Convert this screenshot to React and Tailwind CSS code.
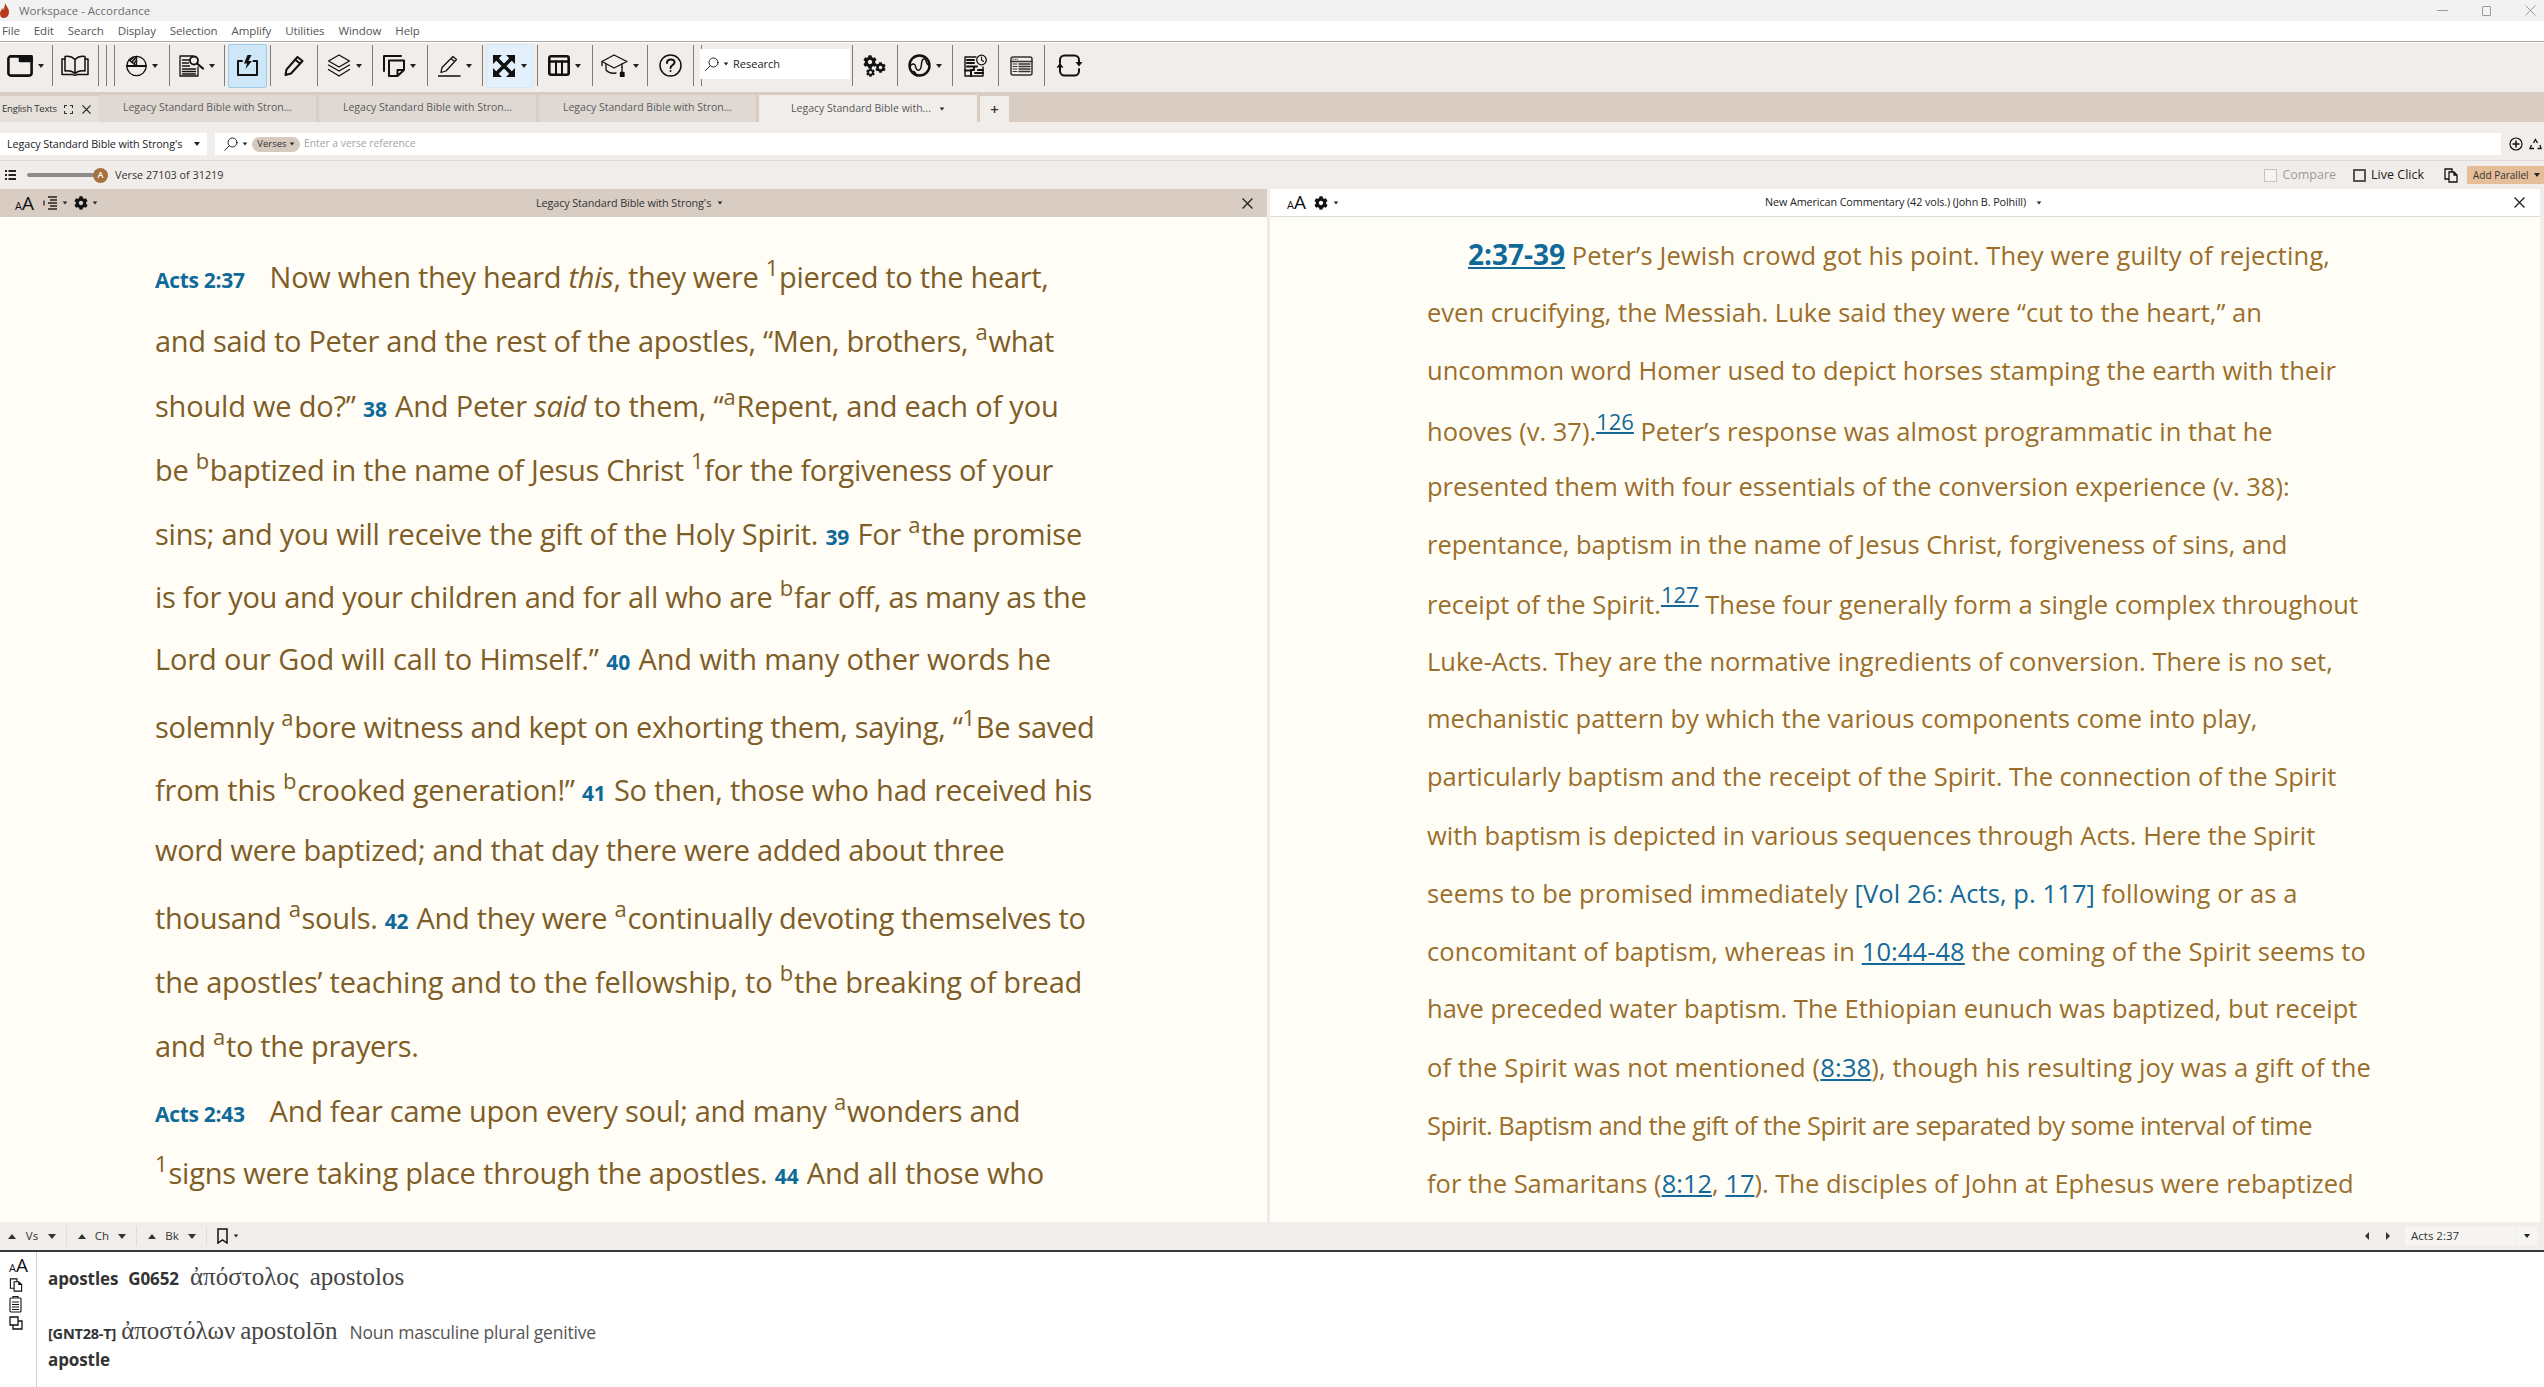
import React from "react";
import { FaCog } from "react-icons/fa";

const ui = "font-['Open_Sans','Noto_Sans',sans-serif]";

const Caret = ({ className = "" }) => (
  <span className={`inline-block shrink-0 w-0 h-0 border-x-[3px] border-x-transparent border-t-[4px] border-t-[#222] ${className}`} />
);

const Up = () => <span className="inline-block w-0 h-0 border-x-[4px] border-x-transparent border-b-[5px] border-b-[#333]" />;
const Down = () => <span className="inline-block w-0 h-0 border-x-[4px] border-x-transparent border-t-[5px] border-t-[#333]" />;

const Ic = ({ w = 26, h = 26, sw = 1.6, stroke = "#111", children }) => (
  <svg width={w} height={h} viewBox={`0 0 ${w} ${h}`} fill="none" stroke={stroke} strokeWidth={sw} strokeLinejoin="round" strokeLinecap="round">
    {children}
  </svg>
);

const Icons = {
  win: (
    <Ic w={26} h={22} sw={2.6}>
      <rect x="1.400" y="1.400" width="23.200" height="19.200" rx="2.500" />
      <rect x="13" y="1.400" width="11.600" height="4.600" fill="#111" />
    </Ic>
  ),
  book: (
    <Ic w={28} h={21} sw={1.500}>
      <path d="M14 4.500C11 1.500 7 1 4 1.500V16c3-.5 7-.5 10 2.500 3-3 7-3 10-2.500V1.500c-3-.5-7 0-10 3zM14 4.500v14" />
      <path d="M4 4H1v15.500h11c1 1 3 1 4 0h11V4h-3" />
    </Ic>
  ),
  pie: (
    <Ic w={21} h={22} sw={1.300}>
      <circle cx="10.500" cy="11" r="9.700" />
      <path d="M1 11h19" strokeWidth="1.800" />
      <path d="M10.500 11V1.500M10.500 11L3 5" />
      <path d="M4.500 5L7.500 2.500M6 7L10 2.500M8 8.500L10.500 5.500" strokeWidth="1.600" />
    </Ic>
  ),
  doc: (
    <Ic w={25} h={22} sw={1.300}>
      <path d="M14 1H1v20h18v-9" />
      <path d="M3.500 5h7M3.500 8h6M3.500 11h7M3.500 14h13M3.500 16.500h13M3.500 19h13" strokeWidth="1.500" />
      <circle cx="15" cy="5.500" r="4" strokeWidth="1.800" />
      <path d="M18 8.500L24 13.500" strokeWidth="2.200" />
    </Ic>
  ),
  bolt: (
    <Ic w={21} h={21} sw={2}>
      <path d="M5 6H1v14h19V6h-3.500" />
      <path d="M10.500 0L7 8.500h3L8.500 14 15 6h-3.500L14.500 0z" fill="#111" stroke="none" />
    </Ic>
  ),
  pencil: (
    <Ic w={20} h={21} sw={2}>
      <path d="M13.500 2l5 4L7 18.500l-5.500 1.500 1-5.500z" />
      <path d="M11 4.500l5 4" />
    </Ic>
  ),
  layers: (
    <Ic w={24} h={23} sw={1.300}>
      <path d="M12 1l10.500 6L12 13 1.500 7z" />
      <path d="M1.500 11L12 17l10.500-6M1.500 15.500L12 22l10.500-6.500" />
    </Ic>
  ),
  copy: (
    <Ic w={22} h={22} sw={2}>
      <path d="M1 16V1h17" />
      <path d="M6 5.500h15v9.500l-6.500 6H6zM21 15h-6.500v6" />
    </Ic>
  ),
  high: (
    <Ic w={23} h={22} sw={1.300}>
      <path d="M15 1.500l3.500 3L8 16l-5 1.500 1-5zM13 3.500l3.500 3" />
      <path d="M0 21h22" strokeWidth="1.600" />
    </Ic>
  ),
  expand: (
    <svg width="22" height="22" viewBox="0 0 22 22" fill="#111" stroke="#111">
      <path d="M4 4L18 18M18 4L4 18" strokeWidth="3.600" fill="none" />
      <path d="M0 0h9L0 9zM22 0v9L13 0zM0 22v-9l9 9zM22 22h-9l9-9z" stroke="none" />
    </svg>
  ),
  table: (
    <Ic w={22} h={21} sw={2.600}>
      <rect x="1.300" y="1.300" width="19.400" height="18.400" rx="2" />
      <path d="M1.300 6.500h19.400" />
      <path d="M8 6.500v13M14 6.500v13" strokeWidth="2" />
    </Ic>
  ),
  cap: (
    <Ic w={27} h={23} sw={1.300}>
      <path d="M1 7.500L13 1l13 6.500L13 14z" />
      <path d="M5 10v6c3 3.500 7 3.500 10 3M21 10v3.500" />
      <path d="M1 7.500v4M21 13.500v5" />
      <rect x="19.500" y="18.500" width="3.500" height="4" fill="#111" />
    </Ic>
  ),
  help: (
    <Ic w={23} h={23} sw={1.500}>
      <circle cx="11.500" cy="11.500" r="10.500" />
      <path d="M8 9c0-5 7.500-4.500 7.500-.5 0 2.500-4 2.500-4 5.500" strokeWidth="2" />
      <circle cx="11.500" cy="17" r="1" fill="#111" stroke="none" />
    </Ic>
  ),
  lens: (
    <Ic w={14} h={14} sw={0.900}>
      <circle cx="8.500" cy="5.500" r="4.500" />
      <path d="M5.200 8.800L.800 13.300" />
    </Ic>
  ),
  gears: (
    <svg width="23" height="22" viewBox="0 0 23 22" color="#111">
      <FaCog x={0} y={0} size={14} />
      <FaCog x={12} y={7} size={11} />
      <FaCog x={3} y={13} size={9} />
    </svg>
  ),
  globe: (
    <Ic w={23} h={23} sw={2.400}>
      <circle cx="11.500" cy="11.500" r="10" />
      <path d="M2 12c2-2 4-3 5-1s1 6 4 5 2-6 3-9 3-3 4 0 2 4 3 4" strokeWidth="1.500" />
      <path d="M4 18.500c1-1.500 2-1 3 0s1 3 2 3.500" strokeWidth="1.500" />
    </Ic>
  ),
  map: (
    <Ic w={23} h={23} sw={2}>
      <path d="M12 3H1v19h18V13" strokeWidth="1.400" />
      <path d="M3 6h7M3 9h7M3 12.500h10M10 12.500V16H7v6M1 16.500h6M11 19h8M14 16h5" />
      <circle cx="17.500" cy="6" r="4.800" strokeWidth="1.300" fill="#f0edea" />
      <path d="M17.500 3v3l2 1.500" strokeWidth="1.100" />
    </Ic>
  ),
  list: (
    <Ic w={23} h={20} sw={1.500} stroke="#333">
      <rect x="1" y="1" width="21" height="18" rx="2" />
      <path d="M1 5.500h21" />
      <path d="M3 3.300h.5M5 3.300h.5M7 3.300h.5" strokeWidth="0.900" />
      <path d="M3 8h4M3 10.500h4M3 13h4M3 15.500h4" strokeWidth="1" />
      <path d="M9 8h11M9 10.500h11M9 13h11M9 15.500h11" strokeWidth="1.300" />
    </Ic>
  ),
  sync: (
    <Ic w={27} h={23} sw={2}>
      <path d="M4 9V6a4.500 4.500 0 0 1 4.500-4.500h10A4.500 4.500 0 0 1 23 6v3" />
      <path d="M23 15v2a4.500 4.500 0 0 1-4.500 4.500h-10A4.500 4.500 0 0 1 4 17v-4" />
      <path d="M19.500 8h7L23 12.500zM.5 13.500h7L4 9z" fill="#111" stroke="none" />
    </Ic>
  ),
};

const XIcon = ({ size = 10, sw = 1.300, color = "#222" }) => (
  <svg width={size} height={size} viewBox="0 0 10 10" stroke={color} strokeWidth={sw} fill="none">
    <path d="M.5.5l9 9M9.500.5l-9 9" />
  </svg>
);

const Cell = ({ w, children, caret, inner }) => (
  <div className={`${w} h-[41px] shrink-0 border-r border-[#7d7d7d] flex items-center justify-center pr-[1px]`}>
    {inner ? (
      <div className={inner}>
        {children}
        {caret && <Caret className="ml-[5px]" />}
      </div>
    ) : (
      <>
        {children}
        {caret && <Caret className="ml-[5px]" />}
      </>
    )}
  </div>
);

const Toolbar = () => (
  <div className="h-[49px] bg-[#f0edea] flex items-start pt-[2px]">
    <Cell w="w-[53px]" caret>{Icons.win}</Cell>
    <Cell w="w-[46px]">{Icons.book}</Cell>
    <div className="w-[8px] h-[41px] border-r border-[#7d7d7d]" />
    <div className="w-[8px] h-[41px] border-r border-[#7d7d7d]" />
    <Cell w="w-[55px]" caret>{Icons.pie}</Cell>
    <Cell w="w-[55px]" caret>{Icons.doc}</Cell>
    <Cell w="w-[46px]" inner="w-[39px] h-[44px] bg-[#cde6f8] border border-[#9dcbec] rounded-[2px] flex items-center justify-center">{Icons.bolt}</Cell>
    <Cell w="w-[47px]">{Icons.pencil}</Cell>
    <Cell w="w-[55px]" caret>{Icons.layers}</Cell>
    <Cell w="w-[55px]" caret>{Icons.copy}</Cell>
    <Cell w="w-[55px]" caret>{Icons.high}</Cell>
    <Cell w="w-[55px]" inner="w-[47px] h-[44px] bg-[#e3f0fb] border border-[#d5e8f7] rounded-[2px] flex items-center justify-center">
      {Icons.expand}
      <Caret className="ml-[6px]" />
    </Cell>
    <Cell w="w-[55px]" caret>{Icons.table}</Cell>
    <Cell w="w-[55px]" caret>{Icons.cap}</Cell>
    <Cell w="w-[46px]">{Icons.help}</Cell>
    <div className="w-[8px] h-[41px] border-r border-[#7d7d7d]" />
    <div className="w-[150px] h-[30px] mt-[4px] -ml-[2px] bg-white flex items-center pl-[5px] text-[11px] text-[#222]">
      {Icons.lens}
      <Caret className="mx-[4px] scale-75" />
      Research
    </div>
    <div className="w-[3px] h-[41px] border-r border-[#7d7d7d]" />
    <Cell w="w-[45px]">{Icons.gears}</Cell>
    <Cell w="w-[55px]" caret>{Icons.globe}</Cell>
    <Cell w="w-[46px]">{Icons.map}</Cell>
    <Cell w="w-[46px]">{Icons.list}</Cell>
    <div className="ml-[11px] mt-[9px]">{Icons.sync}</div>
  </div>
);

const Tab = ({ children, active, w }) => (
  <div className={`${w} h-[27px] mr-[3px] self-end shrink-0 flex items-center justify-center text-[10.500px] text-[#5a5a5a] ${active ? "bg-[#f0edea] h-[26px]" : "bg-[#e0d9d3] border-b-2 border-[#e0d9d3]"}`}>
    {children}
  </div>
);

const Tabs = () => (
  <div className="h-[30px] bg-[#d8ccc3] flex items-end">
    <div className="w-[99px] h-[26px] bg-[#e5e0da] flex items-center pl-[2px] text-[9.500px] text-[#333] tracking-[-0.2px]">
      English Texts
      <svg className="ml-[7px]" width="9" height="9" viewBox="0 0 9 9" fill="none" stroke="#333" strokeWidth="1.100">
        <path d="M.5 3V.5H3M6 .5h2.500V3M8.500 6v2.500H6M3 8.500H.5V6" />
      </svg>
      <span className="ml-[9px]"><XIcon size={9} /></span>
    </div>
    <Tab w="w-[217px]">Legacy Standard Bible with Stron...</Tab>
    <Tab w="w-[217px]">Legacy Standard Bible with Stron...</Tab>
    <Tab w="w-[217px]">Legacy Standard Bible with Stron...</Tab>
    <Tab w="w-[218px]" active>
      Legacy Standard Bible with...
      <Caret className="ml-[8px] scale-75" />
    </Tab>
    <div className="w-[29px] h-[26px] bg-[#f0edea] flex items-center justify-center text-[15px] font-semibold text-[#333]">+</div>
  </div>
);

const SearchRow = () => (
  <div className="h-[39px] bg-[#f0edea] border-b border-[#dcdcdc] pt-[11px] flex items-start">
    <div className="w-[207px] h-[22px] bg-white flex items-center pl-[7px] text-[10.800px] text-[#222] tracking-[-0.1px] shrink-0">
      Legacy Standard Bible with Strong's
      <Caret className="ml-auto mr-[7px]" />
    </div>
    <div className="ml-[8px] flex-1 h-[22px] bg-white flex items-center pl-[9px] text-[11px]">
      {Icons.lens}
      <Caret className="ml-[4px] scale-75" />
      <span className="ml-[4px] w-[48px] h-[15px] rounded-full bg-[#d6cabf] flex items-center justify-center text-[9.500px] text-[#333]">
        Verses
        <Caret className="ml-[2px] scale-75" />
      </span>
      <span className="ml-[4px] text-[#a4a4a4] text-[10.300px]">Enter a verse reference</span>
    </div>
    <div className="w-[43px] h-[22px] flex items-center pl-[8px] gap-[6px] shrink-0">
      <svg width="14" height="14" viewBox="0 0 14 14" fill="none" stroke="#111" strokeWidth="1.200">
        <circle cx="7" cy="7" r="6" />
        <path d="M7 3.500v7M3.500 7h7" strokeWidth="1.500" />
      </svg>
      <svg width="13" height="13" viewBox="0 0 13 13" fill="none" stroke="#111" strokeWidth="1.300">
        <path d="M4.500 5L6.500 1.500 8.500 5M11 7l1 3.500H8.500M5 10.500H1L2.500 7" />
      </svg>
    </div>
  </div>
);

const VerseRow = () => (
  <div className="h-[28px] bg-[#f0edea] flex items-center text-[10.800px] text-[#333]">
    <svg className="ml-[5px]" width="11" height="10" viewBox="0 0 11 10" stroke="#222" strokeWidth="1.800">
      <path d="M0 1h2M3.500 1H11M0 5h2M3.500 5H11M0 9h2M3.500 9H11" />
    </svg>
    <div className="ml-[11px] w-[67px] h-[4px] bg-[#8c8c8c] rounded-full" />
    <span className="w-[15px] h-[15px] -ml-[1px] rounded-full bg-[#a5713c] text-white text-[9px] flex items-center justify-center font-semibold">A</span>
    <span className="ml-[7px]">Verse 27103 of 31219</span>
    <div className="ml-auto flex items-center">
      <span className="w-[13px] h-[13px] border border-[#c4c4c4] bg-[#f4f4f4]" />
      <span className="ml-[5px] text-[#9c9c9c] text-[12.500px]">Compare</span>
      <span className="ml-[17px] w-[13px] h-[13px] border-2 border-[#555]" />
      <span className="ml-[5px] text-[#222] text-[12.500px]">Live Click</span>
      <svg className="ml-[20px]" width="14" height="15" viewBox="0 0 14 15" fill="none" stroke="#111" strokeWidth="1.300">
        <path d="M5 11H1V1h7v3M5 4h5l3 3v7H5zM10 4v3h3" />
      </svg>
      <div className="ml-[9px] w-[77px] h-[18px] bg-[#e5bd98] flex items-center pl-[6px] text-[10px] text-[#333]">
        Add Parallel
        <Caret className="ml-[5px]" />
      </div>
    </div>
  </div>
);

const Aa = ({ big = "text-[19px]", small = "text-[11px]" }) => (
  <span className="flex items-baseline text-[#111] leading-none">
    <span className={small}>A</span>
    <span className={big}>A</span>
  </span>
);

const PaneHeaders = () => (
  <div className="flex h-[28px]">
    <div className="w-[1267px] bg-[#d8ccc3] relative flex items-center text-[10.800px] text-[#333]">
      <span className="ml-[15px]"><Aa /></span>
      <svg className="ml-[9px]" width="15" height="14" viewBox="0 0 15 14" stroke="#222" strokeWidth="1.300">
        <path d="M5 1h9M7 4h7M5 7h9M7 10h7M5 13h9M1 4.500v5" />
      </svg>
      <Caret className="ml-[4px] scale-75" />
      <span className="ml-[6px]"><FaCog size={14} color="#111" /></span>
      <Caret className="ml-[4px] scale-75" />
      <span className="ml-[438px] tracking-[-0.1px]">Legacy Standard Bible with Strong's</span>
      <Caret className="ml-[6px] scale-75" />
      <span className="ml-auto mr-[14px]"><XIcon size={11} sw={1.200} /></span>
    </div>
    <div className="w-[3px] bg-[#f0edea]" />
    <div className="w-[1270px] bg-white border-b border-[#dcdcdc] flex items-center text-[10.800px] text-[#222]">
      <span className="ml-[17px]"><Aa /></span>
      <span className="ml-[8px]"><FaCog size={14} color="#111" /></span>
      <Caret className="ml-[5px] scale-75" />
      <span className="ml-[426px] tracking-[-0.1px]">New American Commentary (42 vols.) (John B. Polhill)</span>
      <Caret className="ml-[10px] scale-75" />
      <span className="ml-auto mr-[15px]"><XIcon size={11} sw={1.200} /></span>
    </div>
    <div className="flex-1 bg-[#f0edea]" />
  </div>
);

const V = ({ children }) => <b className="text-[#0f6a9a] font-bold text-[21px] mr-[1px]">{children}</b>;
const S = ({ children }) => <sup className="text-[22px] top-[-0.55em] relative align-baseline leading-none mr-[1px]">{children}</sup>;

// left pane: line heights follow the reference (lines with a superscript sit a little lower)
const leftLines = [
  ["h-[64px]", <><V>Acts 2:37</V><span className="ml-[24px]">Now when they heard <i>this</i>, they were <S>1</S>pierced to the heart,</span></>],
  ["h-[65px]", <>and said to Peter and the rest of the apostles, “Men, brothers, <S>a</S>what</>],
  ["h-[64px] tracking-[-0.2px]", <>should we do?” <V>38</V> And Peter <i>said</i> to them, “<S>a</S>Repent, and each of you</>],
  ["h-[64px]", <>be <S>b</S>baptized in the name of Jesus Christ <S>1</S>for the forgiveness of your</>],
  ["h-[63px] tracking-[-0.23px]", <>sins; and you will receive the gift of the Holy Spirit. <V>39</V> For <S>a</S>the promise</>],
  ["h-[62px]", <>is for you and your children and for all who are <S>b</S>far off, as many as the</>],
  ["h-[68px] tracking-[-0.12px]", <>Lord our God will call to Himself.” <V>40</V> And with many other words he</>],
  ["h-[63px]", <>solemnly <S>a</S>bore witness and kept on exhorting them, saying, “<S>1</S>Be saved</>],
  ["h-[60px] tracking-[-0.23px]", <>from this <S>b</S>crooked generation!” <V>41</V> So then, those who had received his</>],
  ["h-[68px]", <>word were baptized; and that day there were added about three</>],
  ["h-[64px]", <>thousand <S>a</S>souls. <V>42</V> And they were <S>a</S>continually devoting themselves to</>],
  ["h-[64px] tracking-[-0.19px]", <>the apostles’ teaching and to the fellowship, to <S>b</S>the breaking of bread</>],
  ["h-[65px]", <>and <S>a</S>to the prayers.</>],
  ["h-[62px]", <><V>Acts 2:43</V><span className="ml-[24px]">And fear came upon every soul; and many <S>a</S>wonders and</span></>],
  ["h-[64px] tracking-[-0.2px]", <><S>1</S>signs were taking place through the apostles. <V>44</V> And all those who</>],
];

const A = ({ children }) => <a className="text-[#14699a] underline">{children}</a>;
const Sn = ({ children }) => <sup className="text-[22px] top-[-0.5em] relative align-baseline leading-none"><A>{children}</A></sup>;

const rightLines = [
  ["h-[58px] tracking-[0.14px]", <span className="ml-[41px]"><a className="text-[#0f6a9a] font-bold underline text-[28px] tracking-normal">2:37-39</a> Peter’s Jewish crowd got his point. They were guilty of rejecting,</span>],
  ["h-[58px]", <>even crucifying, the Messiah. Luke said they were “cut to the heart,” an</>],
  ["h-[61px]", <>uncommon word Homer used to depict horses stamping the earth with their</>],
  ["h-[55px]", <>hooves (v. 37).<Sn>126</Sn> Peter’s response was almost programmatic in that he</>],
  ["h-[58px]", <>presented them with four essentials of the conversion experience (v. 38):</>],
  ["h-[60px]", <>repentance, baptism in the name of Jesus Christ, forgiveness of sins, and</>],
  ["h-[57px]", <>receipt of the Spirit.<Sn>127</Sn> These four generally form a single complex throughout</>],
  ["h-[57px]", <>Luke-Acts. They are the normative ingredients of conversion. There is no set,</>],
  ["h-[58px]", <>mechanistic pattern by which the various components come into play,</>],
  ["h-[59px]", <>particularly baptism and the receipt of the Spirit. The connection of the Spirit</>],
  ["h-[58px]", <>with baptism is depicted in various sequences through Acts. Here the Spirit</>],
  ["h-[58px] tracking-[0.1px]", <>seems to be promised immediately <span className="text-[#14699a]">[Vol 26: Acts, p. 117]</span> following or as a</>],
  ["h-[57px] tracking-[0.08px]", <>concomitant of baptism, whereas in <A>10:44-48</A> the coming of the Spirit seems to</>],
  ["h-[59px]", <>have preceded water baptism. The Ethiopian eunuch was baptized, but receipt</>],
  ["h-[58px] tracking-[0.15px]", <>of the Spirit was not mentioned (<A>8:38</A>), though his resulting joy was a gift of the</>],
  ["h-[58px] tracking-[-0.5px]", <>Spirit. Baptism and the gift of the Spirit are separated by some interval of time</>],
  ["h-[58px]", <>for the Samaritans (<A>8:12</A>, <A>17</A>). The disciples of John at Ephesus were rebaptized</>],
];

const Panes = () => (
  <div className="h-[1005px] flex">
    <div className="w-[1267px] bg-[#fffdf6] pl-[155px] pt-[28px] text-[#7e5d27] text-[29px] tracking-[-0.3px] overflow-hidden">
      {leftLines.map(([h, line], i) => (
        <div key={i} className={`${h} leading-[64px]`}>{line}</div>
      ))}
    </div>
    <div className="w-[3px] bg-[#ebebeb]" />
    <div className="w-[1270px] bg-[#fffef6] pl-[157px] pt-[8px] text-[#9b6e2c] text-[25.500px] overflow-hidden">
      {rightLines.map(([h, line], i) => (
        <div key={i} className={`${h} leading-[58px]`}>{line}</div>
      ))}
    </div>
    <div className="flex-1 bg-[#f0edea]" />
  </div>
);

const BottomBar = () => (
  <div className="h-[30px] bg-[#f0edea] border-b-2 border-[#3a3a3a] flex items-center text-[11.500px] text-[#333] pl-[8px]">
    <div className="w-[59px] h-[20px] flex items-center border-r border-[#e0dcd8]">
      <Up /><span className="w-[32px] text-center">Vs</span><Down />
    </div>
    <div className="w-[70px] h-[20px] pl-[11px] flex items-center border-r border-[#e0dcd8]">
      <Up /><span className="w-[32px] text-center">Ch</span><Down />
    </div>
    <div className="w-[70px] h-[20px] pl-[11px] flex items-center border-r border-[#e0dcd8]">
      <Up /><span className="w-[32px] text-center">Bk</span><Down />
    </div>
    <svg className="ml-[10px]" width="11" height="16" viewBox="0 0 11 16" fill="none" stroke="#111" strokeWidth="1.500">
      <path d="M1 1h9v14l-4.500-3L1 15z" />
    </svg>
    <Caret className="ml-[5px] scale-75" />
    <div className="ml-auto flex items-center mr-[6px]">
      <span className="w-0 h-0 border-y-[4px] border-y-transparent border-r-[4px] border-r-[#333]" />
      <span className="ml-[17px] w-0 h-0 border-y-[4px] border-y-transparent border-l-[4px] border-l-[#333]" />
      <div className="ml-[15px] w-[133px] h-[20px] bg-[#f7f5f2] flex items-center pl-[6px]">
        Acts 2:37
        <span className="ml-auto w-[23px] h-[20px] border-l border-[#eeeeee] flex items-center justify-center"><Caret /></span>
      </div>
    </div>
  </div>
);

const Info = () => (
  <div className="flex-1 flex bg-white">
    <div className="w-[37px] border-r border-[#cfcfcf] pl-[9px] pt-[4px] flex flex-col gap-[3px]">
      <Aa big="text-[19px]" small="text-[11px]" />
      <svg width="14" height="14" viewBox="0 0 14 15" fill="none" stroke="#111" strokeWidth="1.200"><path d="M5 11H1V1h7v3M5 4h5l3 3v7H5zM10 4v3h3" /></svg>
      <svg width="13" height="18" viewBox="0 0 13 18" fill="none" stroke="#111" strokeWidth="1.100"><rect x="1" y="3" width="11" height="14" rx="1" /><path d="M4 3V1.500h5V3M3 7h7M3 9.500h7M3 12h7M3 14.500h7" /></svg>
      <svg width="14" height="14" viewBox="0 0 14 14" fill="none" stroke="#111" strokeWidth="1.300"><path d="M1 1h8v8H1zM4 9v4h9V5H9" /></svg>
    </div>
    <div className="pl-[11px] pt-[6px] text-[#333]">
      <div className="h-[32px] flex items-baseline text-[17px] tracking-[-0.1px]">
        <b>apostles</b><b className="ml-[10px]">G0652</b>
        <span className="ml-[11px] font-['Liberation_Serif',serif] text-[25px] font-normal tracking-normal text-[#444]">ἀπόστολος</span>
        <span className="ml-[11px] font-['Liberation_Serif',serif] text-[25px] tracking-normal text-[#444]">apostolos</span>
      </div>
      <div className="mt-[22px] h-[32px] flex items-baseline text-[17.500px] tracking-[-0.2px]">
        <b className="text-[14.500px]">[GNT28-T]</b>
        <span className="ml-[5px] font-['Liberation_Serif',serif] text-[25px] tracking-normal text-[#444]">ἀποστόλων</span>
        <span className="ml-[5px] font-['Liberation_Serif',serif] text-[25px] tracking-normal text-[#444]">apostolōn</span>
        <span className="ml-[12px] text-[#555]">Noun masculine plural genitive</span>
      </div>
      <div className="mt-[1px] text-[17px] font-bold tracking-[-0.1px] leading-[30px]">apostle</div>
    </div>
  </div>
);

export default function App() {
  return (
    <div className={`${ui} w-[2544px] h-[1387px] flex flex-col overflow-hidden bg-white whitespace-nowrap`}>
      <div className="h-[21px] bg-[#f2f2f2] flex items-center text-[11.500px] text-[#6e6e6e] shrink-0">
        <svg width="10" height="15" viewBox="0 0 10 15" className="ml-[0px]">
          <path d="M5 0c1 3 4 5 4 9 0 3-2 6-5 6S0 13 0 10c0-2 2-3 2-5 1 1 1 2 1 2 1-2 2-4 2-7z" fill="#b8391c" />
        </svg>
        <span className="ml-[9px]">Workspace - Accordance</span>
        <div className="ml-auto flex items-center text-[#9a9a9a]">
          <span className="w-[11px] h-[1px] bg-[#9a9a9a]" />
          <span className="ml-[34px] w-[9px] h-[10px] border border-[#9a9a9a] rounded-[1px]" />
          <span className="ml-[34px] mr-[8px]"><XIcon size={11} sw={0.800} color="#8a8a8a" /></span>
        </div>
      </div>
      <div className="h-[20px] bg-white flex items-center gap-[14px] pl-[2px] text-[11.500px] text-[#555] shrink-0 tracking-[-0.1px]">
        {["File", "Edit", "Search", "Display", "Selection", "Amplify", "Utilities", "Window", "Help"].map((m) => (
          <span key={m}>{m}</span>
        ))}
      </div>
      <div className="h-[2px] bg-[#a8a8a8] border-b border-white shrink-0" />
      <Toolbar />
      <Tabs />
      <SearchRow />
      <VerseRow />
      <PaneHeaders />
      <Panes />
      <BottomBar />
      <Info />
    </div>
  );
}
